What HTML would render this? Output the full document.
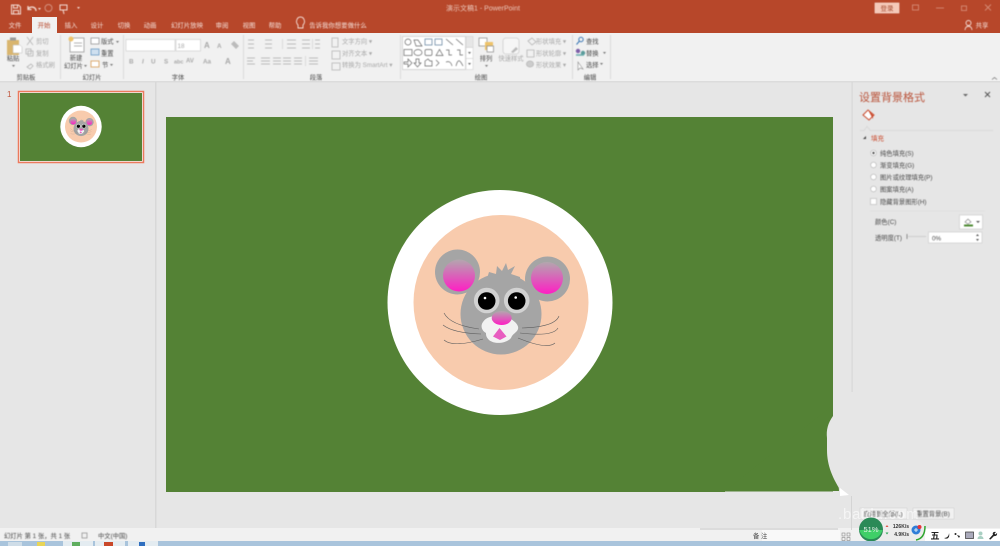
<!DOCTYPE html>
<html><head><meta charset="utf-8"><style>
html,body{margin:0;padding:0;width:1000px;height:546px;overflow:hidden;background:#e6e6e6}
svg{display:block;position:absolute;left:0;top:0}
text{font-family:"Liberation Sans","Noto Sans CJK SC",sans-serif}
.t{font-size:6.3px;fill:#484848}
.g{font-size:6.3px;fill:#a8a8a8}
.m{text-anchor:middle}
.blur{filter:blur(.45px)}
</style></head><body>
<svg width="1000" height="546" viewBox="0 0 1000 546" xmlns="http://www.w3.org/2000/svg">
<defs>
<linearGradient id="pk" x1="0" y1="0" x2="0" y2="1"><stop offset="0" stop-color="#b3a7ae"/><stop offset="1" stop-color="#ff1ec4"/></linearGradient>
<g id="mouse">
<circle cx="457.5" cy="272" r="22.5" fill="#a5a5a5"/>
<circle cx="547.5" cy="279" r="22.5" fill="#a5a5a5"/>
<ellipse cx="459" cy="275.500" rx="16" ry="16" fill="url(#pk)"/>
<ellipse cx="547" cy="278" rx="16" ry="16" fill="url(#pk)"/>
<polygon points="486,282 489,272 496,274 497,266 502,271 506,263 508,270 515,266 511,274 520,277 520,285" fill="#a5a5a5"/>
<circle cx="501" cy="314" r="40.500" fill="#a5a5a5"/>
<circle cx="486.700" cy="300.500" r="12.800" fill="#d2d2d2"/>
<circle cx="516.700" cy="300.500" r="12.800" fill="#d2d2d2"/>
<circle cx="486.700" cy="301" r="8.800" fill="#000"/>
<circle cx="516.700" cy="301" r="8.800" fill="#000"/>
<circle cx="485" cy="298" r="1.300" fill="#fff"/>
<circle cx="515.700" cy="297.500" r="1.300" fill="#fff"/>
<path d="M490,317 C497,315 506,315 511,319 C517,323 520,327 517,331 C514,334 512,335 511,338 C507,343 495,345 489,340 C486,337 486,335 486,333 C482,331 480,326 483,322 C485,319 487,318 490,317Z" fill="#f2f2f2"/>
<ellipse cx="501.700" cy="318" rx="10" ry="7" fill="url(#pk)"/>
<polygon points="499.500,328 506.500,336.500 500,340 493,336.500" fill="#e85cc0"/>
<g fill="none" stroke="#5f5f5f" stroke-width=".6">
<path d="M444,313Q450,325 479,329"/><path d="M443,325Q453,333 481,334"/><path d="M444,340Q453,348 483,339"/>
<path d="M522,328Q555,327 559,316"/><path d="M520,333Q553,337 558,328"/><path d="M518,338Q547,350 555,343"/>
</g>
</g>
</defs>

<!-- backgrounds -->
<rect width="1000" height="546" fill="#e6e6e6"/>
<rect width="1000" height="33" fill="#b7472a"/>
<rect y="33" width="1000" height="48" fill="#f1f1f1"/>
<rect y="81" width="1000" height="1.500" fill="#dcdcdc"/>
<rect x="155" y="82" width="1.500" height="447" fill="#d8d8d8"/>
<rect x="851.500" y="82" width="1.200" height="310" fill="#d8d8d8"/>
<rect y="528" width="1000" height="13" fill="#f1f1f1"/>
<rect x="32" y="17" width="25" height="16" fill="#f1f1f1"/>

<!-- main slide -->
<rect x="166" y="117" width="667" height="375" fill="#548235"/>
<polygon points="725,491 833,405 839,491" fill="#548235"/>
<circle cx="500" cy="302.500" r="112.500" fill="#fff"/>
<circle cx="501" cy="302.500" r="87.500" fill="#f8cbad"/>
<use href="#mouse"/>

<!-- notch -->
<path d="M833,400 L833,416 C828,423 826,430 827,438 L827,450 C827,466 833,478 839,488 L839,491 L860,491 L860,400Z" fill="#e6e6e6"/>
<rect x="725" y="491.500" width="130" height="2" fill="#e6e6e6"/>
<polygon points="840,488 849,495 840,496" fill="#fff"/>
<rect x="851" y="496" width="1" height="34" fill="#d4d4d4"/>

<!-- thumbnail -->
<text x="7" y="97" font-size="8" fill="#c0563c">1</text>
<rect x="18.500" y="91.500" width="125" height="71" fill="#f4f4f4" stroke="#ec7a5e" stroke-width="1.500"/>
<rect x="20" y="93" width="122" height="68" fill="#548235"/>
<circle cx="81" cy="126.500" r="20.700" fill="#fff"/>
<circle cx="81" cy="126.500" r="16" fill="#f8cbad"/>
<g transform="translate(81 126.500) scale(.184) translate(-501 -302.500)"><use href="#mouse"/></g>

<g class="blur">
<!-- QAT -->
<g fill="none" stroke="#f3dcd4" stroke-width="1">
<path d="M11.500,5h7l2,2v7h-9z"/><path d="M13.500,5v3h4V5M13.500,14v-3.500h5V14"/>
<path d="M28,9c3,-3.500 8,-2 8,2M28,6v3.500h3.500" stroke-width="1.300"/>
<circle cx="48.500" cy="8" r="3.500" opacity=".5"/>
<path d="M60,5h7v5h-7zM63,10l1,4"/>
</g>
<path d="M38,8l3,0-1.500,2z M77,7l3,0-1.500,2z" fill="#f3dcd4"/>
<text x="483" y="10.500" font-size="7" fill="#ecc8bb" class="m">演示文稿1  -  PowerPoint</text>
<rect x="875" y="3" width="24" height="10" fill="#f5c9b8" stroke="#fbe6dd" stroke-width=".6"/>
<text x="887" y="10.500" class="m" font-size="6.500" fill="#a2482e">登录</text>
<g fill="none" stroke="#d58c76" stroke-width=".9">
<rect x="912.500" y="5" width="6" height="5"/><path d="M936,8h8"/><rect x="961.500" y="6" width="5" height="4.500"/><path d="M985,4.500l6,6m0,-6l-6,6"/>
</g>

<!-- tabs -->
<g font-size="6.400" fill="#f6e1da" text-anchor="middle">
<text x="15" y="27.500">文件</text><text x="44" y="27.500" fill="#b7472a">开始</text><text x="71" y="27.500">插入</text><text x="97" y="27.500">设计</text><text x="124" y="27.500">切换</text><text x="150" y="27.500">动画</text><text x="187" y="27.500">幻灯片放映</text><text x="222" y="27.500">审阅</text><text x="249" y="27.500">视图</text><text x="275" y="27.500">帮助</text><text x="338" y="27.500">告诉我你想要做什么</text><text x="982" y="27.500">共享</text>
</g>
<path d="M298,25c-3,-3 -1,-8 2.500,-8s5.500,5 2.500,8v3h-5z" fill="none" stroke="#f6e1da" stroke-width=".9"/>
<circle cx="968.500" cy="23" r="2.500" fill="none" stroke="#f6e1da" stroke-width=".9"/><path d="M965,30c0,-5 7,-5 7,0" fill="none" stroke="#f6e1da" stroke-width=".9"/>

<!-- group dividers -->
<g fill="#dcdcdc"><rect x="60" y="35" width="1" height="44"/><rect x="123" y="35" width="1" height="44"/><rect x="243" y="35" width="1" height="44"/><rect x="400" y="35" width="1" height="44"/><rect x="572" y="35" width="1" height="44"/><rect x="610" y="35" width="1" height="44"/></g>
<g class="t m" text-anchor="middle">
<text x="26" y="79.500">剪贴板</text><text x="92" y="79.500">幻灯片</text><text x="178" y="79.500">字体</text><text x="316" y="79.500">段落</text><text x="481" y="79.500">绘图</text><text x="590" y="79.500">编辑</text>
</g>

<!-- clipboard -->
<rect x="7" y="40" width="12" height="15" fill="#d9b56e"/><rect x="10" y="37.500" width="6" height="3" fill="#9a9a9a"/><polygon points="13,45 20,45 22,47 22,53 13,53" fill="#fff" stroke="#bbb" stroke-width=".5"/>
<text x="13" y="60.500" class="t" text-anchor="middle">粘贴</text>
<path d="M12,65l3,0-1.500,2z" fill="#777"/>
<g class="g"><text x="36" y="43.500">剪切</text><text x="36" y="55.500">复制</text><text x="36" y="67">格式刷</text></g>
<g fill="none" stroke="#b5b5b5" stroke-width=".8"><path d="M27,37l6,8m0,-8l-6,8"/><rect x="26" y="49" width="5" height="5"/><rect x="28" y="51" width="5" height="5"/><path d="M27,67l4,-3 2,2-3,3z"/></g>

<!-- new slide -->
<rect x="70" y="38" width="14" height="14" fill="#fff" stroke="#9a9a9a" stroke-width=".8"/><path d="M74,43h8M74,46h8" stroke="#999" stroke-width=".8"/><circle cx="71" cy="39" r="2.500" fill="#eec36a"/>
<text x="76" y="60" class="t" text-anchor="middle">新建</text><text x="73.500" y="68" class="t" text-anchor="middle">幻灯片</text><path d="M84,65l3,0-1.500,2z" fill="#777"/>
<rect x="91" y="38" width="8" height="6" fill="#fff" stroke="#888" stroke-width=".7"/><rect x="91" y="49" width="8" height="6" fill="#cfe0f0" stroke="#5a8fbe" stroke-width=".7"/><rect x="91" y="61" width="8" height="6" fill="#fff" stroke="#d79b52" stroke-width=".8"/>
<text x="101" y="43.500" class="t">版式</text><text x="101" y="55.500" class="t">重置</text><text x="102" y="67" class="t">节</text>
<path d="M116,41l3,0-1.500,2zM110,64l3,0-1.500,2z" fill="#777"/>

<!-- font -->
<rect x="126" y="39.500" width="49" height="11.500" fill="#fff" stroke="#d0d0d0" stroke-width=".7"/><rect x="176" y="39.500" width="24.500" height="11.500" fill="#fff" stroke="#d0d0d0" stroke-width=".7"/>
<text x="177.500" y="48" class="g">18</text>
<g class="g" font-weight="bold"><text x="129" y="63.500">B</text><text x="142" y="63.500" font-style="italic">I</text><text x="151" y="63.500">U</text><text x="164" y="63.500">S</text><text x="174" y="63.500" font-size="5.500">abc</text><text x="186" y="62.500" font-size="6">AV</text><text x="203" y="63.500">Aa</text><text x="225" y="64" font-size="8">A</text><text x="204" y="48" font-size="8">A</text><text x="217" y="48">A</text></g>
<path d="M234,41l5,5-3,3-5,-5z" fill="#bbb"/>

<!-- paragraph -->
<g stroke="#bdbdbd" stroke-width=".9" fill="none">
<path d="M248,40h6M248,44h6M248,48h6M265,40h7M265,44h7M265,48h7M287,40h9M287,44h9M287,48h9M302,40h8M302,44h8M302,48h8M315,40h5M315,44h5M315,48h5"/>
<path d="M247,58h8M247,61h6M247,64h8M261,58h9M261,61h9M261,64h9M273,58h8M273,61h8M273,64h8M283,58h8M283,61h8M283,64h8M294,58h8M294,61h8M294,64h8M309,58h9M309,61h9M309,64h9"/>
<rect x="332" y="38" width="6" height="9"/><rect x="332" y="51" width="8" height="8"/><rect x="332" y="63" width="8" height="7"/>
</g>
<g fill="#dcdcdc"><rect x="282" y="39" width="1" height="10"/><rect x="312" y="39" width="1" height="10"/><rect x="305" y="56" width="1" height="10"/></g>
<g class="g"><text x="342" y="43.500">文字方向 ▾</text><text x="342" y="55.500">对齐文本 ▾</text><text x="342" y="67">转换为 SmartArt ▾</text></g>

<!-- gallery -->
<rect x="402.500" y="36.500" width="63" height="33" fill="#fff" stroke="#c8c8c8" stroke-width=".7"/>
<rect x="466" y="36.500" width="7" height="11" fill="#e6e6e6" stroke="#ccc" stroke-width=".5"/><rect x="466" y="47.500" width="7" height="11" fill="#fff" stroke="#ccc" stroke-width=".5"/><rect x="466" y="58.500" width="7" height="11" fill="#fff" stroke="#ccc" stroke-width=".5"/>
<g fill="none" stroke="#666" stroke-width=".7">
<circle cx="408" cy="42" r="3"/><path d="M414,40l4,0 4,6h-6z"/><rect x="425" y="39" width="7" height="6" stroke="#5a7c9a"/><rect x="435" y="39" width="7" height="6" stroke="#5a7c9a"/><path d="M446,39l7,6M456,39l7,6"/>
<rect x="404" y="49.500" width="8" height="6"/><ellipse cx="418" cy="52.500" rx="4" ry="3"/><rect x="425" y="49.500" width="7" height="6" rx="1.500"/><path d="M436,55.500l3.500,-6 3.500,6z"/><path d="M446,50h3v5h3M457,50h3v5h3"/>
<path d="M404,62h4v-3l4,4-4,4v-3h-4zM416,59h3v4h2l-3.500,4-3.500,-4h2zM425,66v-5l3,-2 2,2h2v5z"/><path d="M436,60l3,3-3,3M446,62c3,-1 5,0 6,4M456,66c2,-8 4,-6 7,0"/>
</g>
<path d="M468,52h3l-1.500,2zM468,63h3l-1.500,2z" fill="#666"/>

<!-- arrange -->
<rect x="479" y="38" width="8" height="8" fill="#fff" stroke="#888" stroke-width=".7"/><rect x="485" y="42" width="8" height="8" fill="#eec36a"/><rect x="487" y="46" width="6.500" height="6" fill="#fff" stroke="#888" stroke-width=".7"/><text x="486" y="60.500" class="t" text-anchor="middle">排列</text><path d="M485,65l3,0-1.500,2z" fill="#777"/>
<rect x="503" y="38" width="16" height="16" rx="3" fill="#f6f6f6" stroke="#cfcfcf" stroke-width=".8"/><path d="M511,52l5,-5 2,2-5,4z" fill="#bbb"/>
<text x="511" y="60.500" class="g" text-anchor="middle">快速样式</text>
<g class="g"><text x="536" y="43.500">形状填充 ▾</text><text x="536" y="55.500">形状轮廓 ▾</text><text x="536" y="67">形状效果 ▾</text></g>
<g fill="none" stroke="#b5b5b5" stroke-width=".8"><path d="M528,41l4,-3 4,4-4,3z"/><path d="M527,50h7v7h-7z"/><ellipse cx="530" cy="64" rx="3.500" ry="3" fill="#ccc"/></g>

<!-- edit -->
<circle cx="581" cy="39.500" r="2.200" fill="none" stroke="#3b78b4" stroke-width="1"/><path d="M579.500,41l-3,3.500" stroke="#3b78b4" stroke-width="1.100"/>
<circle cx="578" cy="51" r="2.200" fill="#7d5fa8"/><circle cx="583" cy="53" r="2.200" fill="#5b9b9b"/><path d="M576,55h8" stroke="#6aa" stroke-width="1.500"/>
<path d="M578,62v8l2,-2 3,1z" fill="#fff" stroke="#888" stroke-width=".6"/>
<g class="t"><text x="586" y="43.500">查找</text><text x="586" y="55.500">替换</text><text x="586" y="67">选择</text></g>
<path d="M603,52l3,0-1.500,2zM600,63l3,0-1.500,2z" fill="#777"/>
<path d="M992,79.500l2.500,-2 2.500,2" fill="none" stroke="#777" stroke-width=".8"/>

<!-- right pane -->
<text x="859" y="101" font-size="11" fill="#b9533a">设置背景格式</text>
<path d="M963,94h5l-2.500,2.500z" fill="#666"/>
<path d="M985,92l5,5m0,-5l-5,5" stroke="#555" stroke-width="1"/>
<path d="M863,115l5,-5 6,5-5,5z" fill="#fff" stroke="#c9482a" stroke-width="1"/><path d="M868,110l5,5 0,4z" fill="#c9482a"/>
<path d="M860,130.500h4l3,-4 3.500,4h122.500" fill="none" stroke="#d6d6d6" stroke-width=".8"/>
<path d="M863,139h3v-3z" fill="#444"/>
<text x="871" y="140.500" font-size="6.500" fill="#c9482a">填充</text>
<g fill="#fff" stroke="#b5b5b5" stroke-width=".6"><circle cx="873.500" cy="153" r="2.800"/><circle cx="873.500" cy="165" r="2.800"/><circle cx="873.500" cy="177" r="2.800"/><circle cx="873.500" cy="189" r="2.800"/><rect x="870.500" y="198.500" width="6" height="6"/></g>
<circle cx="873.500" cy="153" r="1.200" fill="#555"/>
<path d="M870,211h115" stroke="#dcdcdc" stroke-width=".6"/>
<g class="t"><text x="880" y="155.500">纯色填充(S)</text><text x="880" y="167.500">渐变填充(G)</text><text x="880" y="179.500">图片或纹理填充(P)</text><text x="880" y="191.500">图案填充(A)</text><text x="880" y="204">隐藏背景图形(H)</text><text x="875" y="224">颜色(C)</text><text x="875" y="240">透明度(T)</text></g>
<rect x="959.500" y="215" width="23" height="14" fill="#fff" stroke="#cfcfcf" stroke-width=".7"/>
<path d="M965,222l3,-3 3,3-3,2z" fill="#fff" stroke="#777" stroke-width=".6"/><rect x="964" y="224.500" width="9" height="2" fill="#4e8a33"/><path d="M976,221h4l-2,2z" fill="#555"/>
<path d="M907,234v5" stroke="#777" stroke-width=".8"/><path d="M908,236.500h18" stroke="#c4c4c4" stroke-width=".8"/>
<rect x="928.500" y="232" width="53.500" height="11" fill="#fff" stroke="#cfcfcf" stroke-width=".7"/>
<text x="932" y="240.500" class="t">0%</text>
<path d="M976,236l1.500,-2 1.500,2zM976,239l1.500,2 1.500,-2z" fill="#555"/>

<!-- status -->
<text x="4" y="538" class="t">幻灯片 第 1 张，共 1 张</text>
<rect x="82" y="533" width="5" height="5" fill="none" stroke="#888" stroke-width=".7"/>
<text x="98" y="538" class="t">中文(中国)</text>
</g>

<!-- bottom right overlays -->
<rect x="700" y="528" width="138" height="2" fill="#dcdcdc"/>
<rect x="762" y="530" width="78" height="11" fill="#f9f9f9"/>
<text x="753" y="538" class="t">备 注</text>
<rect x="842" y="533" width="3" height="3" fill="none" stroke="#888" stroke-width=".6"/><rect x="847" y="533" width="3" height="3" fill="none" stroke="#888" stroke-width=".6"/><rect x="842" y="537.500" width="3" height="3" fill="none" stroke="#888" stroke-width=".6"/><rect x="847" y="537.500" width="3" height="3" fill="none" stroke="#888" stroke-width=".6"/>
<rect x="860" y="508" width="47" height="11" fill="#f4f4f4" stroke="#d0d0d0" stroke-width=".6" opacity=".85"/>
<rect x="913" y="508" width="41" height="11" fill="#f4f4f4" stroke="#d0d0d0" stroke-width=".6" opacity=".85"/>
<g class="blur"><text x="883" y="516" class="t" text-anchor="middle">应用到全部(L)</text><text x="933" y="516" class="t" text-anchor="middle">重置背景(B)</text></g>
<text x="838" y="519" font-size="15" fill="#fff" opacity=".6" letter-spacing=".8">.baidu.com</text>
<rect x="925" y="529" width="75" height="12" fill="#fff"/>
<rect x="860" y="520" width="65" height="21" rx="10.500" fill="#ececec"/>
<path d="M925,526c0,8 -3,13 -9,14" fill="none" stroke="#2fa52f" stroke-width="1.500"/>
<circle cx="871" cy="529.500" r="12" fill="#2b8a57"/><path d="M859.500,530h23a11.800,11.800 0 0 1 -23,0z" fill="#3fcf68"/>
<text x="871" y="532" font-size="7.500" fill="#e8f5ec" text-anchor="middle">51%</text>
<path d="M887,525l1.500,2h-3z" fill="#e0574a"/><path d="M887,534.500l1.500,-2h-3z" fill="#2fa858"/>
<text x="909" y="528" font-size="5" fill="#333" text-anchor="end" font-weight="bold">126K/s</text>
<text x="909" y="536" font-size="5" fill="#333" text-anchor="end" font-weight="bold">4.9K/s</text>
<circle cx="916" cy="530" r="4.500" fill="#2f7ed8"/><circle cx="919.500" cy="527" r="2" fill="#e8343a"/>
<path d="M914,530h4M916,528v4" stroke="#fff" stroke-width=".8"/>
<text x="935" y="539" font-size="9" fill="#222" text-anchor="middle" font-weight="bold">五</text>
<path d="M944,538c3,0 5,-2 5,-5c1,4 -1,7 -5,5z" fill="#222"/>
<circle cx="955.500" cy="534" r="1" fill="#222"/><path d="M957,535l3,1 -1,2z" fill="#222"/>
<rect x="965.500" y="532" width="8" height="6.500" fill="#aab" stroke="#333" stroke-width=".7"/>
<circle cx="980.500" cy="533.500" r="2" fill="#a9cfc2"/><path d="M977.500,539c0,-4 6,-4 6,0z" fill="#a9cfc2"/>
<path d="M989,539l4,-4.500c-1,-2 1,-3 3,-2.500l-1.500,1.500 1,1 1.500,-1.500c.5,2 -1,3.500 -3,3l-3.500,3.500z" fill="#222"/>

<!-- taskbar -->
<rect y="541" width="1000" height="5" fill="#a9c4dc"/>
<rect x="63" y="541" width="30" height="5" fill="#e4ecf1"/><rect x="95" y="541" width="30" height="5" fill="#e4ecf1"/><rect x="128" y="541" width="30" height="5" fill="#e4ecf1"/>
<rect x="72" y="542" width="8" height="4" fill="#5fae5f"/><rect x="104" y="542" width="9" height="4" fill="#c9482a"/><rect x="139" y="542" width="6" height="4" fill="#2f6fc0"/>
<rect x="8" y="542" width="14" height="4" fill="#cfdde8"/><rect x="37" y="542" width="8" height="4" fill="#e8d558"/>
</svg>
</body></html>
